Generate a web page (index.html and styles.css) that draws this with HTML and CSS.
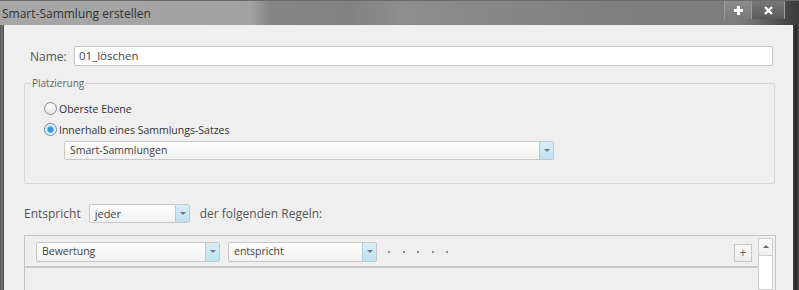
FILE: index.html
```html
<!DOCTYPE html>
<html>
<head>
<meta charset="utf-8">
<link rel="stylesheet" href="styles.css">
</head>
<body>
<div class="window">
  <div class="titlebar">
    <div class="title">Smart-Sammlung erstellen</div>
    <div class="winbtns">
      <div class="wbtn">
        <svg width="9" height="9" viewBox="0 0 9 9"><path d="M3 0h3v3h3v3h-3v3h-3v-3h-3v-3h3z" fill="#fff"/></svg>
      </div>
      <div class="wbtn">
        <svg width="9" height="9" viewBox="0 0 9 9"><path d="M1 1l7 7M8 1l-7 7" stroke="#fff" stroke-width="2.4"/></svg>
      </div>
    </div>
  </div>
  <div class="frame">
    <div class="content">
      <div class="namerow">
        <span class="lbl">Name:</span>
        <div class="input">01_löschen</div>
      </div>
      <div class="group">
        <div class="legend">Platzierung</div>
        <div class="radio"><span class="rb"></span>Oberste Ebene</div>
        <div class="radio"><span class="rb on"></span>Innerhalb eines Sammlungs-Satzes</div>
        <div class="select wide"><span class="val">Smart-Sammlungen</span><span class="arrow"></span></div>
      </div>
      <div class="matchrow">
        <span class="mlabel">Entspricht</span>
        <div class="select jeder"><span class="val">jeder</span><span class="arrow"></span></div>
        <span class="mlabel">der folgenden Regeln:</span>
      </div>
      <div class="rules">
        <div class="rulemain">
          <div class="rule">
            <div class="select bew"><span class="val">Bewertung</span><span class="arrow"></span></div>
            <div class="select ent"><span class="val">entspricht</span><span class="arrow"></span></div>
            <div class="dots"><i></i><i></i><i></i><i></i><i></i></div>
            <div class="plus">+</div>
          </div>
        </div>
        <div class="scroll"><div class="up"></div></div>
      </div>
    </div>
  </div>
</div>
</body>
</html>
```
FILE: styles.css
```css
* { box-sizing: border-box; }
html, body { margin: 0; padding: 0; }
body {
  width: 799px; height: 290px; overflow: hidden;
  font-family: "Open Sans", "Noto Sans", sans-serif;
  background: #444;
}
.window { width: 799px; height: 290px; display: flex; flex-direction: column; overflow: hidden; }
.titlebar {
  height: 25px; flex: none; display: flex; align-items: flex-start; justify-content: space-between;
  background: linear-gradient(90deg, #a7a7a7 0px, #a2a2a2 250px, #858585 270px, #828282 350px, #8e8e8e 400px, #808080 600px, #7c7c7c 740px, #3a3a3a 799px);
  border-top: 1px solid #6a6a6a;
}
.title { font-size: 12px; color: #333; padding: 4px 0 0 2px; }
.winbtns { display: flex; margin-right: 14px; }
.wbtn {
  width: 27px; height: 18px; display: flex; align-items: center; justify-content: center;
  border-left: 1px solid #9a9a9a;
  background: linear-gradient(#8c8c8c, #7a7a7a);
}
.wbtn:last-child { width: 34px; border-right: 1px solid #9a9a9a; background: linear-gradient(#777, #5a5a5a); }
.frame { flex: 1; display: flex; padding: 0 6px 0 4px; background: linear-gradient(90deg, #555 0, #777 2px, #444 4px, #444 793px, #222 796px, #555 799px); }
.content { flex: 1; background: #efefef; padding: 21px 0 0 20px; font-size: 12px; color: #444; }
.namerow { display: flex; align-items: center; height: 20px; }
.lbl { width: 50px; padding-left: 6px; font-size: 12px; color: #555; }
.input {
  width: 699px; height: 20px; background: #fff; border: 1px solid #c6c6c6; border-radius: 2px;
  font-size: 11.5px; color: #444; padding: 0 0 0 4px; line-height: 17px;
}
.group {
  margin-top: 17px; width: 751px; height: 101px; border: 1px solid #d8d8d8; border-radius: 2px;
  position: relative; padding: 14px 0 0 19px;
}
.legend { position: absolute; top: -8px; left: 6px; font-size: 10px; color: #666; background: #efefef; padding: 0 1px; }
.radio { display: flex; align-items: center; height: 21px; font-size: 10.5px; color: #333; }
.rb {
  width: 13px; height: 13px; border-radius: 50%; border: 1px solid #8e8e8e; margin-right: 2px;
  background: radial-gradient(circle at 50% 35%, #fff, #dcdcdc);
}
.rb.on { border-color: #6a8aa8; background: radial-gradient(circle, #3a9ad8 0 2.5px, #aee0f6 3.5px, #f4f4f4 5px); }
.select {
  display: flex; height: 19px; border: 1px solid #c8c8c8; border-radius: 2px;
  background: linear-gradient(#fdfdfd, #f2f2f2);
}
.select .val { flex: 1; padding-left: 5px; font-size: 10.5px; color: #444; line-height: 17px; }
.select .arrow {
  width: 14px; background: linear-gradient(#d6eef8, #bfe2f0); border-left: 1px solid #a8cfe0;
  position: relative;
}
.select .arrow::after {
  content: ""; position: absolute; left: 4px; top: 7px; border-left: 3px solid transparent; border-right: 3px solid transparent; border-top: 3px solid #777;
}
.wide { width: 490px; margin: 1px 0 0 20px; }
.matchrow { display: flex; align-items: center; margin-top: 19px; height: 20px; }
.mlabel { font-size: 12px; color: #555; }
.jeder { width: 101px; margin: 0 10px 0 8px; }
.jeder .val { font-size: 11px; }
.rules {
  margin-top: 12px; width: 752px; height: 55px; border: 1px solid #c4c4c4; border-bottom: none;
  display: flex;
}
.rulemain { flex: 1; }
.rule {
  height: 32px; border-bottom: 2px solid #cacaca; display: flex; align-items: flex-start; padding: 6px 0 0 11px;
}
.bew { width: 184px; height: 20px; }
.ent { width: 149px; height: 20px; margin-left: 8px; }
.dots { display: flex; gap: 12.5px; margin: 9px 0 0 11px; }
.dots i { width: 2px; height: 2px; background: #888; display: block; }
.plus {
  margin-left: auto; margin-right: 6px; margin-top: 2px; width: 18px; height: 18px;
  border: 1px solid #c6c6c6; background: linear-gradient(#fafafa, #ececec);
  font-size: 12px; color: #666; text-align: center; line-height: 15px;
}
.scroll { width: 15px; margin: 2px 2px 0 0; border: 1px solid #d0d0d0; background: #fff; }
.up { height: 17px; border-bottom: 1px solid #d0d0d0; background: linear-gradient(#fbfbfb, #efefef); position: relative; }
.up::after {
  content: ""; position: absolute; left: 4px; top: 6px; border-left: 3px solid transparent; border-right: 3px solid transparent; border-bottom: 3px solid #666;
}
```
